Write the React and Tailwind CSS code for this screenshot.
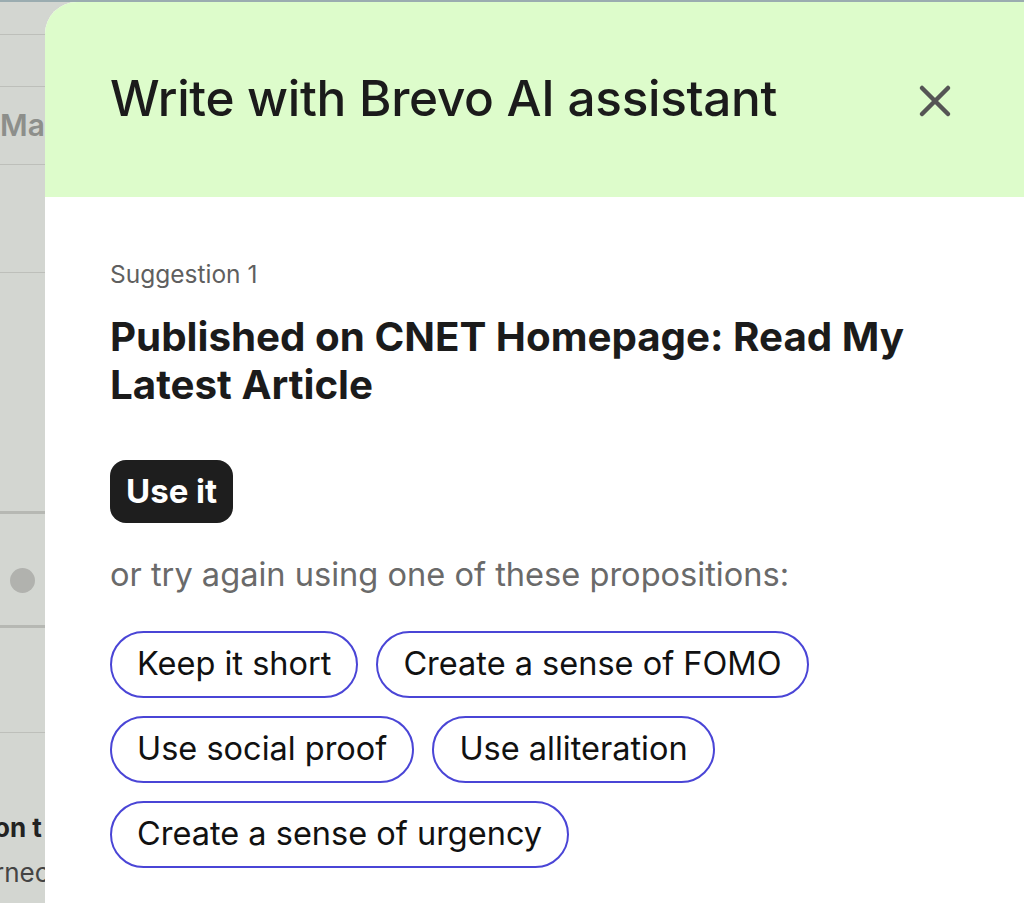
import React from "react";

const chips = [
  ["Keep it short", "Create a sense of FOMO"],
  ["Use social proof", "Use alliteration"],
  ["Create a sense of urgency"],
];

function Chip({ children }) {
  return (
    <button className="h-[67px] rounded-full border-2 border-[#4a45d6] bg-white px-[25px] text-[32.5px] leading-none text-[#111111]">
      {children}
    </button>
  );
}

export default function App() {
  return (
    <div
      className="flex h-[903px] w-[1024px] flex-col overflow-hidden bg-[#d3d6d1]"
      style={{ fontFamily: "Inter, 'Noto Sans', sans-serif" }}
    >
      <div className="h-[2px] w-full bg-[#9aacb0]" />
      <div className="flex flex-1">
        {/* background app behind */}
        <div className="flex w-[45px] shrink-0 flex-col text-[#8d8f8b]">
          <div className="h-[33px] border-b border-[#bdbfba]" />
          <div className="h-[52px] border-b border-[#bdbfba]" />
          <div className="flex h-[78px] items-center border-b border-[#bdbfba] text-[30px] font-semibold">
            Ma
          </div>
          <div className="h-[108px] border-b border-[#bdbfba]" />
          <div className="h-[241px] border-b-[3px] border-[#b6b8b3]" />
          <div className="h-[114px] border-b-[3px] border-[#b6b8b3] pl-[10px] pt-[54px]">
            <div className="h-[25px] w-[25px] rounded-full bg-[#b1b2ae]" />
          </div>
          <div className="h-[105px] border-b border-[#bdbfba]" />
          <div className="overflow-hidden whitespace-nowrap pt-[82px] text-[26px] leading-none">
            <div className="-ml-[6px] font-bold text-[#222]">on t</div>
            <div className="-ml-[6px] mt-[19px] text-[#444]">rnec</div>
          </div>
        </div>

        {/* panel */}
        <div className="flex flex-1 flex-col overflow-hidden rounded-tl-[32px] bg-white">
          <div className="flex h-[195px] shrink-0 items-center justify-between bg-[#ddfccb] pl-[65px] pr-[72px]">
            <h1 className="-mt-[2px] text-[49.5px] font-medium leading-none tracking-[-0.3px] text-[#1b1b1b]">
              Write with Brevo AI assistant
            </h1>
            <svg width="34" height="34" viewBox="0 0 34 34" className="mt-[2px]">
              <path d="M4 4 L30 30 M30 4 L4 30" stroke="#555555" strokeWidth="4.5" strokeLinecap="round" />
            </svg>
          </div>
          <div className="flex flex-col pl-[65px] pr-[60px] pt-[62px]">
            <div className="text-[24.5px] leading-[30px] text-[#5f5f5f]">Suggestion 1</div>
            <div className="mt-[24px] text-[40.3px] font-bold leading-[48px] text-[#1b1b1b]">
              Published on CNET Homepage: Read My Latest Article
            </div>
            <div className="mt-[51px]">
              <button className="h-[63px] rounded-[16px] bg-[#1e1e1e] px-[16px] text-[33px] font-bold text-white">
                Use it
              </button>
            </div>
            <div className="mt-[33px] text-[32.6px] leading-[36px] text-[#6a6a6a]">
              or try again using one of these propositions:
            </div>
            <div className="mt-[39px] flex flex-col gap-[18px]">
              {chips.map((row, i) => (
                <div key={i} className="flex gap-[18px]">
                  {row.map((c) => (
                    <Chip key={c}>{c}</Chip>
                  ))}
                </div>
              ))}
            </div>
          </div>
        </div>
      </div>
    </div>
  );
}
